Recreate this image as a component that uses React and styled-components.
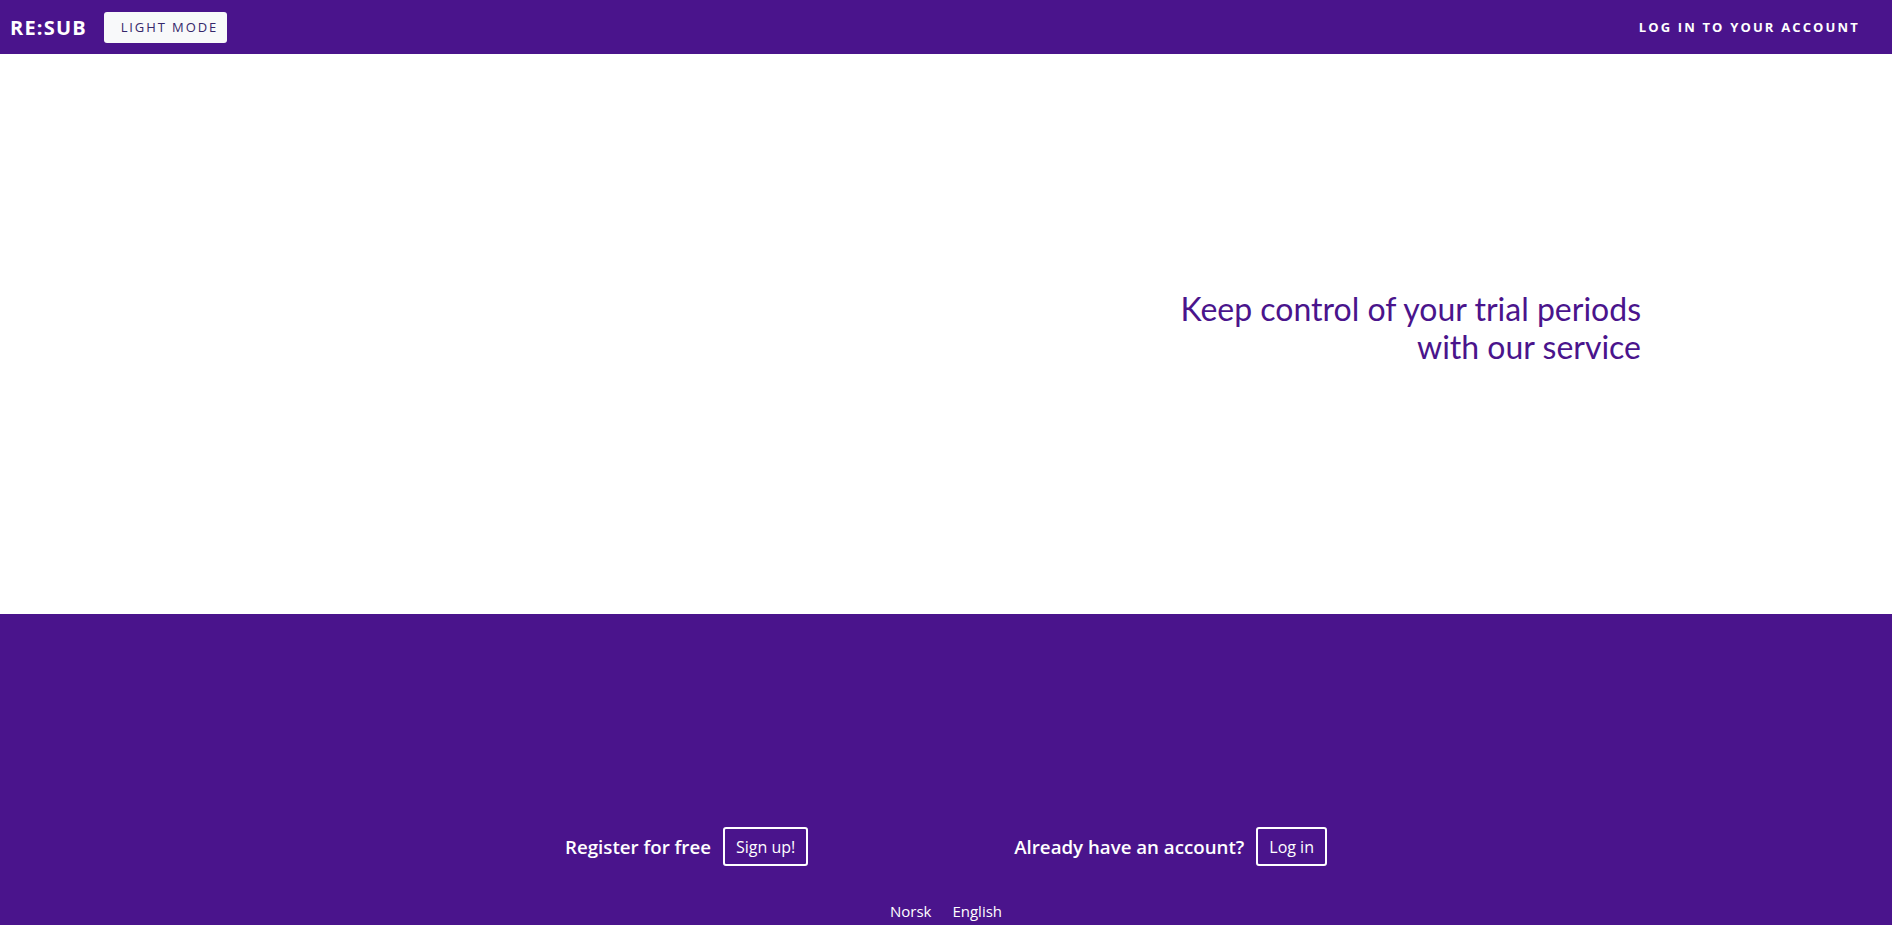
import React from "react";
import styled, { createGlobalStyle } from "styled-components";

const purple = "#4a148c";

const GlobalStyle = createGlobalStyle`
  body {
    margin: 0;
    background: #ffffff;
    font-family: "Open Sans", "Noto Sans", sans-serif;
  }
  * {
    box-sizing: border-box;
  }
`;

const App = () => {
  return (
    <>
      <GlobalStyle />
      <Navbar>
        <Brand>RE:SUB</Brand>
        <ModeButton>Light mode</ModeButton>
        <NavLink href="#">Log in to your account</NavLink>
      </Navbar>
      <Hero>
        <Headline>
          Keep control of your trial periods
          <br />
          with our service
        </Headline>
      </Hero>
      <Footer>
        <CtaRow>
          <CtaGroup>
            <CtaLabel>Register for free</CtaLabel>
            <OutlineButton>Sign up!</OutlineButton>
          </CtaGroup>
          <CtaGroup>
            <CtaLabel>Already have an account?</CtaLabel>
            <OutlineButton>Log in</OutlineButton>
          </CtaGroup>
        </CtaRow>
        <LangRow>
          <LangLink href="#">Norsk</LangLink>
          <LangLink href="#">English</LangLink>
        </LangRow>
      </Footer>
    </>
  );
};

const Navbar = styled.nav`
  height: 54px;
  background: ${purple};
  display: flex;
  align-items: center;
  padding: 0 32px 0 10px;
`;

const Brand = styled.span`
  color: #fff;
  font-family: "Open Sans", sans-serif;
  font-weight: 700;
  font-size: 20px;
  letter-spacing: 1.2px;
`;

const ModeButton = styled.button`
  margin-left: 17px;
  width: 123px;
  height: 31px;
  background: #f8f9fa;
  border: none;
  border-radius: 3px;
  color: #35276b;
  font-family: "Open Sans", sans-serif;
  font-weight: 400;
  font-size: 13px;
  letter-spacing: 1.9px;
  text-transform: uppercase;
  padding: 0 0 0 8px;
`;

const NavLink = styled.a`
  margin-left: auto;
  color: #fff;
  text-decoration: none;
  text-transform: uppercase;
  font-family: "Open Sans", sans-serif;
  font-weight: 700;
  font-size: 13px;
  letter-spacing: 2.15px;
`;

const Hero = styled.section`
  height: 560px;
  display: flex;
  align-items: center;
  justify-content: flex-end;
  padding: 0 251px 12px 0;
`;

const Headline = styled.h1`
  margin: 0;
  font-family: Lato, sans-serif;
  font-weight: 400;
  font-size: 32px;
  line-height: 38px;
  color: ${purple};
  text-align: right;
`;

const Footer = styled.footer`
  background: ${purple};
  padding: 213px 0 40px;
  color: #fff;
`;

const CtaRow = styled.div`
  display: flex;
  justify-content: center;
  gap: 206px;
`;

const CtaGroup = styled.div`
  display: flex;
  align-items: center;
  gap: 12px;
`;

const CtaLabel = styled.span`
  font-family: "Open Sans", sans-serif;
  font-weight: 600;
  font-size: 18.7px;
`;

const OutlineButton = styled.button`
  height: 39px;
  padding: 0 11px;
  background: transparent;
  border: 2px solid #fff;
  border-radius: 3px;
  color: #fff;
  font-family: "Open Sans", sans-serif;
  font-size: 16px;
`;

const LangRow = styled.div`
  display: flex;
  justify-content: center;
  gap: 21px;
  margin-top: 34px;
`;

const LangLink = styled.a`
  color: #fff;
  text-decoration: none;
  font-family: "Open Sans", sans-serif;
  font-size: 15px;
  line-height: 22px;
`;

export default App;
